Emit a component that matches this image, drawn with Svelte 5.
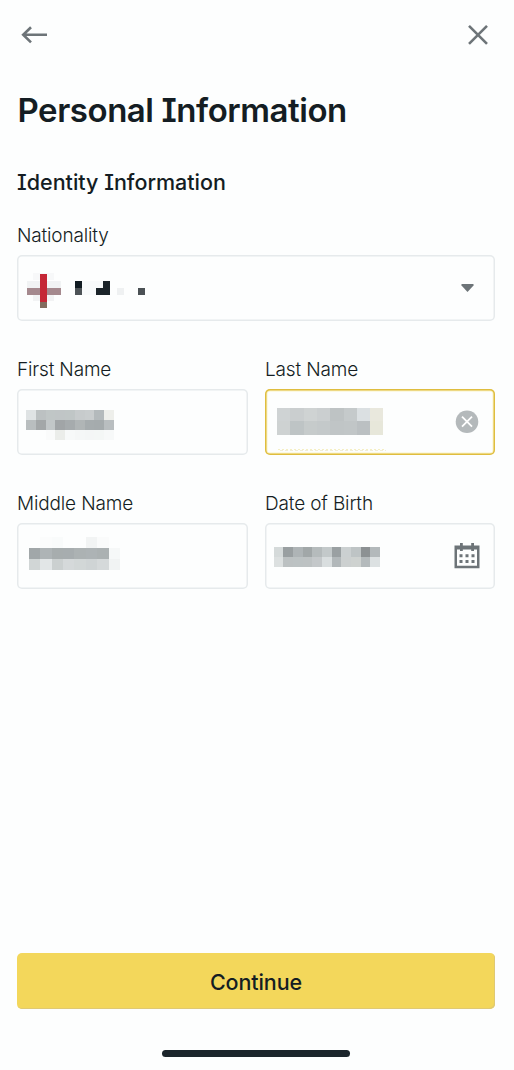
<script lang="ts">
	type Mosaic = { x: number; y: number; w: number; h: number; rows: string[][] };

	const firstName: Mosaic = {
		x: 9.3, y: 21, w: 9.71, h: 9.85,
		rows: [
			['#dfe3e4', '#bcc1c2', '#c0c6c6', '#c0c5c6', '#c0c6c6', '#c7cbcc', '#c9cdce', '#b4babc', '#eeefeb'],
			['#b9bebf', '#a3a7a8', '#c2c7c8', '#a1a5a7', '#a6abad', '#b0b5b6', '#a6acae', '#a5abad', '#b9bec0'],
			['', '', '#fafbfb', '#ebedea', '#f7f9f9', '#f5f7f7', '#f4f6f6', '#f4f7f6', '#f7f9f9']
		]
	};
	const lastName: Mosaic = {
		x: 12, y: 19, w: 13.3, h: 13.4,
		rows: [
			['#cfd3d4', '#cacecf', '#cfd3d3', '#cbcfd0', '#bec3c4', '#c5cacb', '#dbe0e2', '#e9e8dd'],
			['#ced2d2', '#bec4c5', '#c6cbcb', '#c4c9ca', '#c0c5c6', '#c1c6c7', '#bbc0c2', '#e7e7da']
		]
	};
	const middleName: Mosaic = {
		x: 12, y: 13.7, w: 11.37, h: 11.1,
		rows: [
			['', '#fbfcfc', '#f9fbfb', '', '', '#f2f4f4', '#fafbfb', ''],
			['#a1a7a9', '#aeb4b6', '#a7adae', '#a7adaf', '#acb2b3', '#adb3b5', '#abb1b2', '#f6f8f8'],
			['#d1d6d6', '#e2e6e7', '#cbd0d0', '#d5d9da', '#d2d7d7', '#cfd4d5', '#d5d9da', '#f1f3f3']
		]
	};
	const birthDate: Mosaic = {
		x: 8.8, y: 24, w: 9.65, h: 9.85,
		rows: [
			['#d5dada', '#999fa1', '#aeb4b6', '#a1a7a8', '#b5bbbc', '#c3c9ca', '#9aa0a2', '#cbd0d1', '#bec4c5', '#8c9193', '#b3b9bb'],
			['#dce0e0', '#bcc1c2', '#bcc2c3', '#bdc2c3', '#c4c8ca', '#d9dedf', '#b2b8ba', '#ccd0d0', '#ced2d0', '#b4babc', '#dce1e2']
		]
	};

	const country = [
		[23, 18, 7, 7, '#f3f4f5'],
		[16, 18, 21, 7, '#f7f8f9'],
		[10, 26, 34, 7, '#f1f3f4'],
		[16, 40, 21, 6, '#f2f3f4'],
		[10, 33, 34, 7, '#a5898e'],
		[23, 19, 7, 28, '#c52736'],
		[23, 47, 7, 6, '#826c5e'],
		[58, 26, 7, 7, '#111b22'],
		[58, 33, 7, 7, '#4d5357'],
		[65, 26, 21, 14, '#f8fafb'],
		[86, 26, 7, 7, '#1b242a'],
		[79, 33, 14, 7, '#1b242a'],
		[100, 33, 7, 7, '#eff1f2'],
		[121, 33, 7, 7, '#4b5155']
	] as const;
</script>

{#snippet hidden(m: Mosaic)}
	<svg class="mosaic" width="140" height="66" viewBox="0 0 140 66" shape-rendering="crispEdges">
		{#each m.rows as row, r}
			{#each row as fill, c}
				{#if fill}
					<rect x={m.x + c * m.w} y={m.y + r * m.h} width={m.w} height={m.h} {fill} />
				{/if}
			{/each}
		{/each}
		{#if m === lastName}
			<path d="M13 60.5h108" stroke="#f5efc4" stroke-dasharray="2 2" />
			<path d="M15 61.5h106" stroke="#f2eed6" stroke-dasharray="3 2" />
		{/if}
	</svg>
{/snippet}

<main>
	<header>
		<button class="icon" aria-label="Back">
			<svg width="28" height="22" viewBox="0 0 28 22" fill="none" stroke="#6d7478" stroke-width="2.6">
				<path d="M27 10.8H3M11 3.2L3.2 10.8l7.8 7.6" />
			</svg>
		</button>
		<button class="icon" aria-label="Close">
			<svg width="22" height="22" viewBox="0 0 22 22" fill="none" stroke="#6d7478" stroke-width="2.6">
				<path d="M2 1.8l18 18M20 1.8L2 19.8" />
			</svg>
		</button>
	</header>

	<h1>Personal Information</h1>
	<h2>Identity Information</h2>

	<div class="form">
		<div class="field wide">
			<span class="label">Nationality</span>
			<div class="box">
				<svg class="mosaic" width="140" height="66" viewBox="0 0 140 66" shape-rendering="crispEdges">
					{#each country as [x, y, width, height, fill]}
						<rect {x} {y} {width} {height} {fill} />
					{/each}
				</svg>
				<svg class="caret" width="13" height="8" viewBox="0 0 13 8">
					<path d="M0.5 0h12v1.5L6.5 8 0.5 1.5z" fill="#6d7478" />
				</svg>
			</div>
		</div>

		<div class="field">
			<span class="label">First Name</span>
			<div class="box">{@render hidden(firstName)}</div>
		</div>
		<div class="field">
			<span class="label">Last Name</span>
			<div class="box focused">
				{@render hidden(lastName)}
				<svg width="24" height="24" viewBox="0 0 24 24">
					<circle cx="12" cy="11.7" r="11.3" fill="#b4b9bb" />
					<path d="M7 6.7l10 10M17 6.7L7 16.7" stroke="#fff" stroke-width="1.8" />
				</svg>
			</div>
		</div>

		<div class="field">
			<span class="label">Middle Name</span>
			<div class="box">{@render hidden(middleName)}</div>
		</div>
		<div class="field">
			<span class="label">Date of Birth</span>
			<div class="box">
				{@render hidden(birthDate)}
				<svg class="calendar" width="26" height="26" viewBox="0 0 26 26" fill="#6d7478">
					<path d="M0.5 2.5h25V25.3H0.5zM3 6.5v16.3h20V6.5z" fill-rule="evenodd" />
					<path d="M6 0h2.8v8H6zM17.2 0H20v8h-2.8z" />
					<path d="M5.5 11.3h3v3h-3zM11.5 11.3h3v3h-3zM17.5 11.3h3v3h-3zM5.5 17h3v3h-3zM11.5 17h3v3h-3zM17.5 17h3v3h-3z" />
				</svg>
			</div>
		</div>
	</div>

	<footer>
		<button class="continue">Continue</button>
		<div class="home"></div>
	</footer>
</main>

<style>
	:global(body) {
		margin: 0;
		background: #fdfefe;
	}

	main {
		box-sizing: border-box;
		height: 1070px;
		padding: 20px 19px 13px 17px;
		display: flex;
		flex-direction: column;
		font-family: Inter, 'Liberation Sans', sans-serif;
		font-feature-settings: 'cv08' 1;
		color: #141d23;
	}

	button {
		font: inherit;
		font-feature-settings: inherit;
		color: inherit;
		border: none;
		padding: 0;
		cursor: pointer;
	}

	svg {
		display: block;
		flex: none;
	}

	header {
		display: flex;
		justify-content: space-between;
		align-items: center;
		height: 29px;
		padding: 0 6px 0 3px;
	}

	.icon {
		background: none;
	}

	h1 {
		margin: 41px 0 0 0.5px;
		font-size: 33px;
		line-height: 40px;
		font-weight: 600;
		letter-spacing: -0.45px;
		white-space: nowrap;
	}

	h2 {
		margin: 39px 0 0;
		font-size: 21.5px;
		line-height: 27px;
		font-weight: 500;
		white-space: nowrap;
	}

	.form {
		display: grid;
		grid-template-columns: 231px 230px;
		gap: 34px 17px;
		margin-top: 25px;
	}

	.wide {
		grid-column: 1 / -1;
	}

	.label {
		display: block;
		height: 34px;
		font-size: 19px;
		line-height: 30px;
		font-weight: 350;
		letter-spacing: -0.15px;
		white-space: nowrap;
	}

	.box {
		box-sizing: border-box;
		height: 66px;
		padding-right: 16px;
		display: flex;
		align-items: center;
		justify-content: space-between;
		border-radius: 5px;
		box-shadow: inset 0 0 0 1.5px #e6eaec;
	}

	.focused {
		box-shadow: inset 0 0 0 1.5px #dfbd3f, inset 0 0 0 2.5px #faf3c8;
	}

	.caret {
		margin-right: 5px;
	}

	.calendar {
		margin-right: -1px;
	}

	footer {
		margin-top: auto;
		display: flex;
		flex-direction: column;
		align-items: center;
	}

	.continue {
		width: 478px;
		height: 56px;
		padding-top: 2px;
		border-radius: 5px;
		background: #f3d75b;
		box-shadow: inset -1px -1px 0 #dfc974;
		font-size: 21.5px;
		font-weight: 500;
		letter-spacing: -0.1px;
	}

	.home {
		width: 188px;
		height: 7px;
		margin-top: 41px;
		border-radius: 4px;
		background: #1b252b;
	}
</style>
